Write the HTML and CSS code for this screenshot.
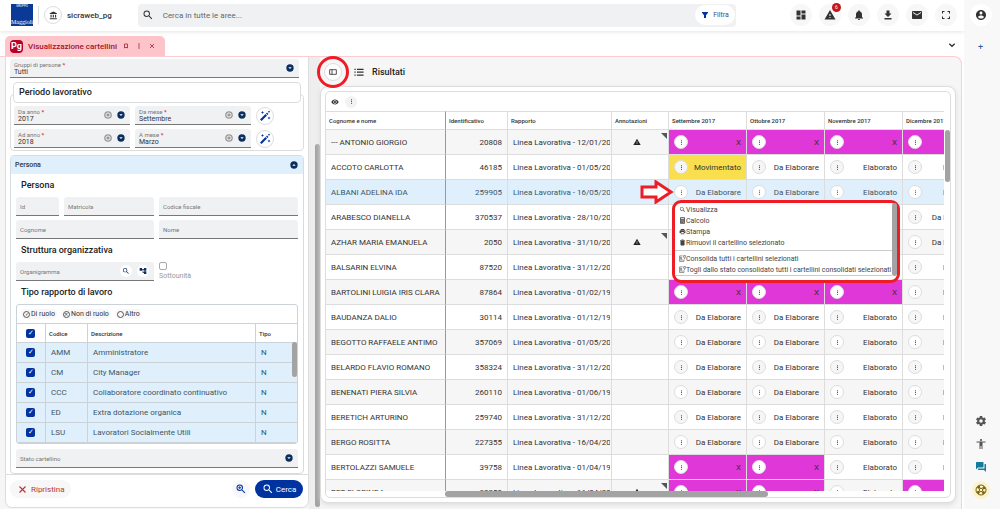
FILE: index.html
```html
<!DOCTYPE html>
<html lang="it">
<head>
    <meta charset="UTF-8">
    <meta name="viewport" content="width=device-width, initial-scale=1.0">
    <title>Visualizzazione cartellini</title>

    <link rel="stylesheet" href="styles.css">
</head>
<body>
    <!-- icons -->
    <svg class="sprite" aria-hidden="true">
        <symbol id="search" viewBox="0 0 24 24"><path d="M15.5 14h-.79l-.28-.27A6.471 6.471 0 0 0 16 9.5 6.5 6.5 0 1 0 9.5 16c1.61 0 3.09-.59 4.23-1.57l.27.28v.79l5 4.99L20.49 19l-4.99-5zm-6 0C7.01 14 5 11.99 5 9.5S7.01 5 9.5 5 14 7.01 14 9.5 11.99 14 9.5 14z"/></symbol>
        <symbol id="zoom" viewBox="0 0 24 24"><path d="M15.5 14h-.79l-.28-.27A6.471 6.471 0 0 0 16 9.5 6.5 6.5 0 1 0 9.5 16c1.61 0 3.09-.59 4.23-1.57l.27.28v.79l5 4.99L20.49 19l-4.99-5zm-6 0C7.01 14 5 11.99 5 9.5S7.01 5 9.5 5 14 7.01 14 9.5 11.99 14 9.5 14zM8.700 6.500h1.600v2.200h2.200v1.600h-2.200v2.200H8.700v-2.200H6.500V8.700h2.200z"/></symbol>
        <symbol id="bank" viewBox="0 0 24 24"><path d="M4 10v7h3v-7H4zm6 0v7h3v-7h-3zM2 22h19v-3H2v3zm14-12v7h3v-7h-3zm-4.500-9L2 6v2h19V6l-9.500-5z"/></symbol>
        <symbol id="funnel" viewBox="0 0 24 24"><path d="M3 3h18v2l-6 8v8h-6v-8L3 5z"/></symbol>
        <symbol id="dashboard" viewBox="0 0 24 24"><path d="M3 13h8V3H3v10zm0 8h8v-6H3v6zm10 0h8V11h-8v10zm0-18v6h8V3h-8z"/></symbol>
        <symbol id="warning" viewBox="0 0 24 24"><path d="M1 21h22L12 2 1 21zm12-3h-2v-2h2v2zm0-4h-2v-4h2v4z"/></symbol>
        <symbol id="bell" viewBox="0 0 24 24"><path d="M12 22c1.100 0 2-.9 2-2h-4c0 1.100.89 2 2 2zm6-6v-5c0-3.070-1.640-5.640-4.500-6.320V4c0-.83-.67-1.500-1.500-1.500s-1.500.67-1.500 1.500v.68C7.630 5.360 6 7.920 6 11v5l-2 2v1h16v-1l-2-2z"/></symbol>
        <symbol id="download" viewBox="0 0 24 24"><path d="M19 9h-4V3H9v6H5l7 7 7-7zM5 18v3h14v-3H5z"/></symbol>
        <symbol id="mail" viewBox="0 0 24 24"><path d="M20 4H4c-1.100 0-2 .9-2 2v12c0 1.100.9 2 2 2h16c1.100 0 2-.9 2-2V6c0-1.100-.9-2-2-2zm0 4l-8 5-8-5V6l8 5 8-5v2z"/></symbol>
        <symbol id="fullscreen" viewBox="0 0 24 24"><path d="M6 15H4v5h5v-2H6v-3zM4 9h2V6h3V4H4v5zm14 9h-3v2h5v-5h-2v3zM15 4v2h3v3h2V4h-5z"/></symbol>
        <symbol id="account" viewBox="0 0 24 24"><path d="M12 2C6.480 2 2 6.480 2 12s4.480 10 10 10 10-4.480 10-10S17.520 2 12 2zm0 3c1.660 0 3 1.340 3 3s-1.340 3-3 3-3-1.340-3-3 1.340-3 3-3zm0 14.200c-2.500 0-4.710-1.280-6-3.220.03-1.990 4-3.080 6-3.080 1.990 0 5.970 1.090 6 3.080-1.290 1.940-3.500 3.220-6 3.220z"/></symbol>
        <symbol id="bookmark" viewBox="0 0 24 24"><path d="M6 4h12v16l-6-3-6 3z" fill="none" stroke="currentColor" stroke-width="3"/></symbol>
        <symbol id="more" viewBox="0 0 24 24"><circle cx="12" cy="4" r="2.600"/><circle cx="12" cy="12" r="2.600"/><circle cx="12" cy="20" r="2.600"/></symbol>
        <symbol id="close" viewBox="0 0 24 24"><path d="M4 4l16 16M20 4L4 20" fill="none" stroke="currentColor" stroke-width="3"/></symbol>
        <symbol id="chevron" viewBox="0 0 24 24"><path d="M4 8l8 8 8-8" fill="none" stroke="currentColor" stroke-width="4"/></symbol>
        <symbol id="drop" viewBox="0 0 24 24"><circle cx="12" cy="12" r="11"/><path d="M7 10h10l-5 5z" fill="#fff"/></symbol>
        <symbol id="rise" viewBox="0 0 24 24"><circle cx="12" cy="12" r="11"/><path d="M7 14h10l-5-5z" fill="#fff"/></symbol>
        <symbol id="clear" viewBox="0 0 24 24"><circle cx="12" cy="12" r="9.500" fill="none" stroke="currentColor" stroke-width="4"/><path d="M8 8l8 8M16 8l-8 8" fill="none" stroke="currentColor" stroke-width="4"/></symbol>
        <symbol id="wand" viewBox="0 0 24 24"><path d="M2 19L13 8l3 3L5 22zM14 7l2-2 3 3-2 2zM7 2l1 2 2 1-2 1-1 2-1-2-2-1 2-1zM20 1l.8 1.700L22.500 3.500l-1.700.8L20 6l-.8-1.700-1.700-.8 1.700-.8zM20 13l1 2 2 1-2 1-1 2-1-2-2-1 2-1z"/></symbol>
        <symbol id="tree" viewBox="0 0 24 24"><path d="M22 11V3h-7v3H9V3H2v8h7V8h2v10h4v3h7v-8h-7v3h-2V8h2v3z"/></symbol>
        <symbol id="panel" viewBox="0 0 24 24"><path d="M2 5h20v14H2zM9 5v14" fill="none" stroke="currentColor" stroke-width="2.500"/></symbol>
        <symbol id="list" viewBox="0 0 24 24"><path d="M1 4h3v3H1zM1 11h3v3H1zM1 18h3v3H1zM7 4h16v3H7zM7 11h16v3H7zM7 18h16v3H7z"/></symbol>
        <symbol id="eye" viewBox="0 0 24 24"><path d="M12 4.500C7 4.500 2.730 7.610 1 12c1.730 4.390 6 7.500 11 7.500s9.270-3.110 11-7.500c-1.730-4.390-6-7.500-11-7.500zM12 17c-2.760 0-5-2.240-5-5s2.240-5 5-5 5 2.240 5 5-2.240 5-5 5zm0-8c-1.660 0-3 1.340-3 3s1.340 3 3 3 3-1.340 3-3-1.340-3-3-3z"/></symbol>
        <symbol id="calc" viewBox="0 0 24 24"><path d="M4 1h16v22H4z"/><path d="M7 4h10v4H7zM7 11h2v2H7zM11 11h2v2h-2zM15 11h2v2h-2zM7 15h2v2H7zM11 15h2v2h-2zM15 15h2v5h-2zM7 19h6v1H7z" fill="#fff"/></symbol>
        <symbol id="print" viewBox="0 0 24 24"><path d="M19 8H5c-1.660 0-3 1.340-3 3v6h4v4h12v-4h4v-6c0-1.660-1.340-3-3-3zm-3 11H8v-5h8v5zm3-7c-.55 0-1-.45-1-1s.45-1 1-1 1 .45 1 1-.45 1-1 1zm-1-9H6v4h12V3z"/></symbol>
        <symbol id="trash" viewBox="0 0 24 24"><path d="M5 20c0 1.100.9 2 2 2h10c1.100 0 2-.9 2-2V7H5v13zM20 3h-4l-1-1H9L8 3H4v3h16V3z"/></symbol>
        <symbol id="badge" viewBox="0 0 24 24"><path d="M12 3H2v19h15v-7M5 17h8M7 8a2 2 0 1 0 .1 0M4 14q3-4 6 0M16 2h6v5l-3 4-3-4zM19 11v3" fill="none" stroke="currentColor" stroke-width="2"/></symbol>
        <symbol id="gear" viewBox="0 0 24 24"><path d="M19.430 12.980c.04-.32.07-.64.07-.98s-.03-.66-.07-.98l2.110-1.650c.19-.15.24-.42.12-.64l-2-3.460c-.12-.22-.39-.3-.61-.22l-2.490 1c-.52-.4-1.080-.73-1.690-.98l-.38-2.650C14.460 2.180 14.250 2 14 2h-4c-.25 0-.46.18-.49.42l-.38 2.650c-.61.25-1.170.59-1.690.98l-2.490-1c-.23-.09-.49 0-.61.22l-2 3.460c-.13.22-.07.49.12.64l2.110 1.650c-.04.32-.07.65-.07.98s.03.66.07.98l-2.110 1.650c-.19.15-.24.42-.12.64l2 3.460c.12.22.39.3.61.22l2.490-1c.52.4 1.080.73 1.690.98l.38 2.650c.03.24.24.42.49.42h4c.25 0 .46-.18.49-.42l.38-2.650c.61-.25 1.170-.59 1.690-.98l2.490 1c.23.09.49 0 .61-.22l2-3.460c.12-.22.07-.49-.12-.64l-2.110-1.650zM12 15.500a3.500 3.500 0 1 1 0-7 3.500 3.500 0 0 1 0 7z"/></symbol>
        <symbol id="person" viewBox="0 0 24 24"><path d="M12 2c1.100 0 2 .9 2 2s-.9 2-2 2-2-.9-2-2 .9-2 2-2zm9 7h-6v13h-2v-6h-2v6H9V9H3V7h18v2z"/></symbol>
        <symbol id="forum" viewBox="0 0 24 24"><path d="M21 6h-2v9H6v2c0 .55.45 1 1 1h11l4 4V7c0-.55-.45-1-1-1zm-4 6V3c0-.55-.45-1-1-1H3c-.55 0-1 .45-1 1v14l4-4h10c.55 0 1-.45 1-1z"/></symbol>
        <symbol id="help" viewBox="0 0 24 24"><g fill="none" stroke="currentColor"><circle cx="12" cy="12" r="10" stroke-width="2"/><circle cx="12" cy="12" r="3.500" stroke-width="2"/><circle cx="12" cy="12" r="7" stroke-width="5" stroke-dasharray="5 6" stroke-dashoffset="-3"/></g></symbol>
    </svg>

    <div class="app">
        <header class="topbar">
            <div class="logo"><span class="logo-top">GRUPPO</span><span class="logo-name">Maggioli</span></div>
            <div class="company">
                <button type="button" class="round" aria-label="Ente"><svg><use href="#bank"/></svg></button>
                <b>sicraweb_pg</b>
            </div>
            <div class="search">
                <svg><use href="#search"/></svg>
                <input type="search" placeholder="Cerca in tutte le aree..." aria-label="Cerca in tutte le aree">
                <button type="button" class="filter"><svg><use href="#funnel"/></svg>Filtra</button>
            </div>
            <nav class="actions">
                <button type="button" aria-label="Dashboard"><svg><use href="#dashboard"/></svg></button>
                <button type="button" aria-label="Avvisi"><svg><use href="#warning"/></svg><span class="count">6</span></button>
                <button type="button" aria-label="Notifiche"><svg><use href="#bell"/></svg></button>
                <button type="button" aria-label="Download"><svg><use href="#download"/></svg></button>
                <button type="button" aria-label="Messaggi"><svg><use href="#mail"/></svg></button>
                <button type="button" aria-label="Schermo intero"><svg><use href="#fullscreen"/></svg></button>
            </nav>
        </header>

        <div class="tabs">
            <div class="tab">
                <span class="pg">Pg</span>
                <b>Visualizzazione cartellini</b>
                <button type="button" aria-label="Segnalibro"><svg><use href="#bookmark"/></svg></button>
                <button type="button" aria-label="Altro"><svg><use href="#more"/></svg></button>
                <button type="button" aria-label="Chiudi"><svg><use href="#close"/></svg></button>
            </div>
            <button type="button" class="tabs-more" aria-label="Schede"><svg><use href="#chevron"/></svg></button>
        </div>

        <main class="workspace">
            <!-- search form -->
            <form class="filters">
                <div class="filters-body">
                    <div class="field">
                        <div class="field-text">
                            <label for="gruppi">Gruppi di persone <i>*</i></label>
                            <select id="gruppi"><option>Tutti</option></select>
                        </div>
                        <svg class="drop"><use href="#drop"/></svg>
                    </div>

                    <section class="period">
                        <h2 class="period-title">Periodo lavorativo</h2>
                        <div class="row">
                            <div class="field">
                                <div class="field-text">
                                    <label for="daAnno">Da anno <i>*</i></label>
                                    <select id="daAnno"><option>2017</option></select>
                                </div>
                                <svg class="clear"><use href="#clear"/></svg>
                                <svg class="drop"><use href="#drop"/></svg>
                            </div>
                            <div class="field">
                                <div class="field-text">
                                    <label for="daMese">Da mese <i>*</i></label>
                                    <select id="daMese"><option>Settembre</option></select>
                                </div>
                                <svg class="clear"><use href="#clear"/></svg>
                                <svg class="drop"><use href="#drop"/></svg>
                            </div>
                            <button type="button" class="round wand" aria-label="Imposta inizio"><svg><use href="#wand"/></svg></button>
                        </div>
                        <div class="row">
                            <div class="field">
                                <div class="field-text">
                                    <label for="adAnno">Ad anno <i>*</i></label>
                                    <select id="adAnno"><option>2018</option></select>
                                </div>
                                <svg class="clear"><use href="#clear"/></svg>
                                <svg class="drop"><use href="#drop"/></svg>
                            </div>
                            <div class="field">
                                <div class="field-text">
                                    <label for="aMese">A mese <i>*</i></label>
                                    <select id="aMese"><option>Marzo</option></select>
                                </div>
                                <svg class="clear"><use href="#clear"/></svg>
                                <svg class="drop"><use href="#drop"/></svg>
                            </div>
                            <button type="button" class="round wand" aria-label="Imposta fine"><svg><use href="#wand"/></svg></button>
                        </div>
                    </section>

                    <section class="person">
                        <div class="person-head"><b>Persona</b><svg class="drop"><use href="#rise"/></svg></div>
                        <div class="person-body">
                            <h2>Persona</h2>
                            <div class="grid">
                                <div class="field empty"><label for="id">Id</label><input id="id" type="text"></div>
                                <div class="field empty"><label for="matricola">Matricola</label><input id="matricola" type="text"></div>
                                <div class="field empty"><label for="cf">Codice fiscale</label><input id="cf" type="text"></div>
                                <div class="field empty wide"><label for="cognome">Cognome</label><input id="cognome" type="text"></div>
                                <div class="field empty"><label for="nome">Nome</label><input id="nome" type="text"></div>
                            </div>
                            <h2>Struttura organizzativa</h2>
                            <div class="grid">
                                <div class="field empty wide">
                                    <label for="org">Organigramma</label><input id="org" type="text">
                                    <button type="button" class="mini" aria-label="Cerca organigramma"><svg><use href="#search"/></svg></button>
                                    <button type="button" class="mini" aria-label="Albero"><svg><use href="#tree"/></svg></button>
                                </div>
                                <div class="sub"><input type="checkbox" id="sub"><label for="sub">Sottounità</label></div>
                            </div>
                            <h2>Tipo rapporto di lavoro</h2>
                            <div class="types">
                                <div class="types-bar">
                                    <label><input type="checkbox" class="yes" checked>Di ruolo</label>
                                    <label><input type="checkbox" class="no" checked>Non di ruolo</label>
                                    <label><input type="checkbox">Altro</label>
                                </div>
                                <table>
                                    <colgroup><col class="c-check"><col class="c-code"><col><col class="c-type"></colgroup>
                                    <thead>
                                        <tr><th><input type="checkbox" aria-label="Tutti" checked></th><th>Codice</th><th>Descrizione</th><th>Tipo</th></tr>
                                    </thead>
                                    <tbody class="typeList"></tbody>
                                </table>
                                <span class="bar types-scroll"></span>
                            </div>
                            <div class="field empty">
                                <label for="stato">Stato cartellino</label>
                                <select id="stato"><option></option></select>
                                <svg class="drop"><use href="#drop"/></svg>
                            </div>
                        </div>
                    </section>
                </div>
                <div class="filters-foot">
                    <button type="reset" class="reset"><svg><use href="#close"/></svg>Ripristina</button>
                    <button type="button" class="advanced" aria-label="Ricerca avanzata"><svg><use href="#zoom"/></svg></button>
                    <button type="button" class="submit"><svg><use href="#search"/></svg>Cerca</button>
                </div>
            </form>

            <div class="gutter"><span class="bar"></span></div>

            <!-- results -->
            <section class="results">
                <div class="results-head">
                    <button type="button" class="round toggle" aria-label="Mostra filtri"><svg><use href="#panel"/></svg></button>
                    <svg class="list"><use href="#list"/></svg>
                    <h2>Risultati</h2>
                </div>
                <div class="card">
                    <div class="sheet">
                        <div class="sheet-bar">
                            <button type="button" aria-label="Colonne"><svg><use href="#eye"/></svg></button>
                            <button type="button" class="dots" aria-label="Altro"><svg><use href="#more"/></svg></button>
                        </div>
                        <div class="sheet-scroll">
                            <table>
                                <colgroup>
                                    <col class="w-name"><col class="w-ident"><col class="w-rapp"><col class="w-note">
                                    <col class="w-month"><col class="w-month"><col class="w-month"><col class="w-last">
                                </colgroup>
                                <thead>
                                    <tr>
                                        <th>Cognome e nome</th><th>Identificativo</th><th>Rapporto</th><th>Annotazioni</th>
                                        <th>Settembre 2017</th><th>Ottobre 2017</th><th>Novembre 2017</th><th>Dicembre 2017</th>
                                    </tr>
                                </thead>
                                <tbody class="personList"></tbody>
                            </table>
                        </div>
                        <span class="bar sheet-v"></span>
                        <span class="bar sheet-h"></span>
                    </div>
                </div>
            </section>
        </main>
    </div>

    <aside class="rail">
        <button type="button" class="me" aria-label="Profilo"><svg><use href="#account"/></svg></button>
        <button type="button" class="plus" aria-label="Aggiungi">+</button>
        <div class="rail-foot">
            <button type="button" aria-label="Impostazioni"><svg><use href="#gear"/></svg></button>
            <button type="button" aria-label="Accessibilità"><svg><use href="#person"/></svg></button>
            <button type="button" class="chat" aria-label="Chat"><svg><use href="#forum"/></svg></button>
            <button type="button" class="help" aria-label="Aiuto"><svg><use href="#help"/></svg></button>
        </div>
    </aside>

    <!-- context menu of the selected month -->
    <template id="menu">
        <svg class="arrow" viewBox="0 0 34 24"><path d="M2 7h14V2l15 10-15 10v-5H2z"/></svg>
        <div class="menu">
            <div class="menu-list">
                <button type="button"><svg><use href="#search"/></svg>Visualizza</button>
                <button type="button"><svg><use href="#calc"/></svg>Calcolo</button>
                <button type="button"><svg><use href="#print"/></svg>Stampa</button>
                <button type="button"><svg><use href="#trash"/></svg>Rimuovi il cartellino selezionato</button>
                <hr>
                <button type="button"><svg><use href="#badge"/></svg>Consolida tutti i cartellini selezionati</button>
                <button type="button"><svg><use href="#badge"/></svg>Togli dallo stato consolidato tutti i cartellini consolidati selezionati</button>
            </div>
            <span class="bar"></span>
        </div>
    </template>

    <script src="script.js"></script>
</body>
</html>
```
FILE: styles.css
```css
* {
    box-sizing: border-box;
}

body {
    margin: 0;
    height: 100vh;
    display: flex;
    overflow: hidden;
    background-color: #fff;
    color: #333;
    font-family: Roboto, "Liberation Sans", sans-serif;
    font-size: 8px;
}

button, input, select {
    font: inherit;
    color: inherit;
    border: 0;
    padding: 0;
    margin: 0;
    background: none;
}

button {
    display: flex;
    align-items: center;
    justify-content: center;
}

select {
    appearance: none;
}

b, h2 {
    font-weight: 500;
}

svg {
    width: 12px;
    height: 12px;
    flex: none;
    fill: currentColor;
}

.sprite {
    position: absolute;
    width: 0;
    height: 0;
}

.bar {
    display: block;
    background-color: #a3a3a3;
    border-radius: 3px;
}

.app {
    flex: 1;
    min-width: 0;
    display: flex;
    flex-direction: column;
}

.round {
    width: 18px;
    height: 18px;
    flex: none;
    border: 1px solid #ddd;
    border-radius: 50%;
    background-color: #fff;
}

/* top bar */
.topbar {
    flex: 0 0 31px;
    display: flex;
    align-items: center;
    padding: 0 7px 1px 11px;
    box-shadow: 0 1px 4px #e4e4e4;
}

.logo {
    width: 22px;
    height: 22px;
    display: flex;
    flex-direction: column;
    align-items: center;
    justify-content: space-between;
    background-color: #0a3a96;
    color: #fff;
    overflow: hidden;
}

.logo-top {
    font-size: 3px;
    line-height: 5px;
}

.logo-name {
    font-family: "Liberation Serif", serif;
    font-size: 6px;
    line-height: 7px;
}

.company {
    display: flex;
    align-items: center;
    gap: 5px;
    margin-left: 5px;
    padding-left: 5px;
    border-left: 1px solid #ddd;
}

.company svg {
    width: 9px;
    height: 9px;
}

.search {
    flex: 1;
    height: 23px;
    display: flex;
    align-items: center;
    gap: 9px;
    margin: 0 54px 0 26px;
    padding: 0 1px 0 4px;
    border-radius: 4px;
    background-color: #f0f1f2;
}

.search input {
    flex: 1;
    min-width: 0;
    outline: 0;
    appearance: none;
}

.search input::placeholder {
    color: #666;
    opacity: 1;
}

.filter {
    width: 40px;
    height: 20px;
    gap: 4px;
    border-radius: 10px;
    background-color: #fff;
    color: #41507a;
    font-size: 7px;
}

.filter svg {
    width: 8px;
    height: 8px;
    color: #0033a0;
}

.actions {
    display: flex;
    gap: 7px;
}

.actions button {
    position: relative;
    width: 22px;
    height: 22px;
    border-radius: 50%;
    background-color: #f7f7f7;
}

.count {
    position: absolute;
    top: -1px;
    right: 0;
    width: 9px;
    height: 9px;
    border-radius: 50%;
    background-color: #c4161c;
    color: #fff;
    font-size: 5px;
    line-height: 9px;
}

/* tabs */
.tabs {
    flex: 0 0 25px;
    display: flex;
    align-items: flex-end;
    justify-content: space-between;
    padding: 0 8px 0 5px;
}

.tab {
    height: 20px;
    display: flex;
    align-items: center;
    gap: 5px;
    padding: 0 9px 0 5px;
    border-radius: 5px 5px 0 0;
    background-color: #fdc5c9;
    color: #a3102c;
}

.tab button {
    width: 8px;
}

.tab svg {
    width: 6px;
    height: 6px;
}

.pg {
    width: 13px;
    height: 13px;
    border-radius: 4px;
    background-color: #b8002b;
    color: #fff;
    font-size: 9px;
    font-weight: 700;
    line-height: 13px;
    text-align: center;
}

.tabs-more {
    height: 22px;
}

.tabs-more svg {
    width: 8px;
    height: 8px;
}

/* workspace */
.workspace {
    flex: 1;
    min-height: 0;
    display: flex;
    margin-right: 2px;
    padding-left: 5px;
    border-top: 1px solid #fccdd0;
    border-right: 1px solid #fccdd0;
    border-top-right-radius: 8px;
    background-color: #f6f6f6;
}

.filters {
    flex: 0 0 304px;
    display: flex;
    flex-direction: column;
    margin-bottom: 1px;
    border: 1px solid #ddd;
    border-top: 0;
    border-radius: 0 0 7px 7px;
    background-color: #fff;
    overflow: hidden;
}

.filters-body {
    flex: 1;
    min-height: 0;
    padding: 2px 4px 0;
    overflow: hidden;
}

.filters-body > .field {
    margin-right: 5px;
}

.field {
    flex: 1;
    min-width: 0;
    height: 19px;
    display: flex;
    align-items: center;
    gap: 5px;
    padding: 0 5px 0 4px;
    border-bottom: 1px solid #777;
    border-radius: 3px 3px 0 0;
    background-color: #f0f1f2;
}

.field-text {
    flex: 1;
    min-width: 0;
}

.field label {
    display: block;
    color: #777;
    font-size: 6px;
    line-height: 7px;
    white-space: nowrap;
}

.field i {
    color: #d22;
    font-style: normal;
    font-weight: 700;
}

.field select, .field input {
    display: block;
    width: 100%;
    height: 8px;
    font-size: 7px;
    line-height: 8px;
}

.field.empty input, .field.empty select {
    flex: 1;
    width: auto;
    min-width: 0;
}

.drop {
    width: 8px;
    height: 8px;
    color: #0b2e5e;
}

.clear {
    width: 8px;
    height: 8px;
    color: #999;
}

.row {
    display: flex;
    align-items: center;
    gap: 5px;
}

.row + .row {
    margin-top: 4px;
}

.period {
    margin-top: 16px;
    padding: 0 29px 2px 3px;
    border: 1px solid #ddd;
    border-radius: 4px;
}

.period-title {
    position: relative;
    height: 21px;
    margin: -13px -27px 3px -1px;
    padding-left: 5px;
    border: 1px solid #ddd;
    border-radius: 4px;
    background-color: #fff;
    color: #222;
    font-size: 9px;
    line-height: 19px;
}

.wand {
    color: #0033a0;
}

.person {
    margin-top: 4px;
    border: 1px solid #d5dde2;
    border-radius: 4px;
    overflow: hidden;
}

.person-head {
    height: 18px;
    display: flex;
    align-items: center;
    justify-content: space-between;
    padding: 0 5px 0 4px;
    background-color: #dfeffc;
    font-size: 7px;
}

.person-body {
    padding: 0 5px 5px;
}

.person-body h2 {
    margin: 0 0 0 5px;
    color: #222;
    font-size: 9px;
    line-height: 23px;
}

.grid {
    display: grid;
    grid-template-columns: 43px 90px 1fr;
    gap: 4px 5px;
}

.wide {
    grid-column: span 2;
}

.mini {
    width: 12px;
    height: 12px;
    border-radius: 50%;
    background-color: #fff;
    color: #0b2e5e;
}

.mini svg {
    width: 8px;
    height: 8px;
}

.sub {
    color: #999;
    font-size: 7px;
    line-height: 9px;
}

.sub label {
    display: block;
}

.sub input {
    display: block;
    width: 8px;
    height: 8px;
    margin-bottom: 2px;
    appearance: none;
    border: 1px solid #aaa;
    border-radius: 2px;
}

/* employment types */
.types {
    position: relative;
    height: 140px;
    margin-bottom: 5px;
    border: 1px solid #ccd3d8;
    border-radius: 3px;
    overflow: hidden;
}

.types-bar {
    height: 18px;
    display: flex;
    align-items: center;
    gap: 4px;
    padding-left: 4px;
}

.types-bar label {
    display: flex;
    align-items: center;
    gap: 1px;
    padding: 1px 2px;
    border-radius: 6px;
    background-color: #f7f7f7;
    font-size: 7px;
}

.types-bar input {
    width: 7px;
    height: 7px;
    appearance: none;
    border: 1px solid #555;
    border-radius: 50%;
    font-size: 5px;
    line-height: 5px;
    text-align: center;
}

.types-bar .yes::after {
    content: "✓";
}

.types-bar .no::after {
    content: "✕";
}

.types table, .sheet table {
    width: 100%;
    border-collapse: separate;
    border-spacing: 0;
    table-layout: fixed;
}

.c-check {
    width: 28px;
}

.c-code {
    width: 42px;
}

.c-type {
    width: 42px;
}

.types th, .types td {
    height: 20px;
    padding: 0 0 0 5px;
    border-top: 1px solid #ccd3d8;
    border-left: 1px solid #ccd3d8;
    text-align: left;
    white-space: nowrap;
}

.types th {
    height: 19px;
    padding-left: 3px;
    font-size: 6px;
    font-weight: 500;
}

.types td {
    background-color: #dfeffc;
    color: #3d5666;
}

.types th:first-child, .types td:first-child {
    padding-left: 9px;
    border-left: 0;
}

.types table input {
    display: block;
    width: 9px;
    height: 9px;
    appearance: none;
    border-radius: 2px;
    background-color: #0033a0;
    color: #fff;
    font-size: 7px;
    line-height: 9px;
    text-align: center;
}

.types table input::after {
    content: "✓";
}

.types-scroll {
    position: absolute;
    top: 37px;
    right: 0;
    width: 5px;
    height: 35px;
}

.filters-foot {
    flex: 0 0 33px;
    display: flex;
    align-items: center;
    padding: 0 5px 4px 4px;
    border-top: 1px solid #ddd;
}

.filters-foot button {
    height: 18px;
    border-radius: 9px;
}

.reset {
    gap: 4px;
    padding: 0 7px 0 8px;
    background-color: #f7f7f7;
    color: #b8343c;
}

.reset svg {
    width: 9px;
    height: 9px;
}

.advanced {
    width: 18px;
    margin: 0 5px 0 auto;
    background-color: #f7f7f7;
    color: #0033a0;
}

.submit {
    width: 48px;
    gap: 2px;
    background-color: #0033a0;
    color: #fff;
}

.gutter {
    flex: 0 0 11px;
    display: flex;
    flex-direction: column;
    align-items: flex-end;
    background-color: #eee;
}

.gutter .bar {
    flex: 1;
    width: 5px;
    margin: 87px 0 2px;
}

/* results */
.results {
    flex: 1;
    min-width: 0;
    display: flex;
    flex-direction: column;
    padding: 0 5px 6px 0;
}

.results-head {
    flex: 0 0 29px;
    display: flex;
    align-items: center;
    padding-left: 4px;
}

.results-head h2 {
    margin: 0 0 0 8px;
    color: #222;
    font-size: 9px;
}

.toggle {
    position: relative;
}

.toggle::after {
    content: "";
    position: absolute;
    inset: -8px;
    z-index: 2;
    border: 3px solid #ee1c24;
    border-radius: 50%;
}

.toggle svg {
    width: 8px;
    height: 8px;
}

.list {
    width: 10px;
    height: 10px;
    margin-left: 12px;
}

.card {
    flex: 1;
    min-height: 0;
    display: flex;
    padding: 4px;
    border: 1px solid #ddd;
    border-radius: 8px;
    background-color: #fff;
    box-shadow: 0 2px 5px #ddd;
}

.sheet {
    position: relative;
    flex: 1;
    min-width: 0;
    display: flex;
    flex-direction: column;
    border: 1px solid #ddd;
    border-radius: 5px;
}

.sheet-bar {
    flex: 0 0 19px;
    display: flex;
    align-items: center;
    gap: 4px;
    padding-left: 3px;
}

.sheet-bar button {
    width: 12px;
    height: 12px;
    border-radius: 50%;
}

.sheet-bar svg {
    width: 8px;
    height: 8px;
}

.sheet-bar .dots {
    background-color: #f2f2f2;
}

.sheet-bar .dots svg, .dot svg {
    width: 5px;
    height: 5px;
}

.sheet-scroll {
    flex: 1;
    min-height: 0;
    margin: 0 6px 6px 0;
    overflow: hidden;
}

.sheet .sheet-scroll table {
    width: 657px;
}

.w-name {
    width: 120px;
}

.w-ident {
    width: 62px;
}

.w-rapp {
    width: 104px;
}

.w-note {
    width: 57px;
}

.w-month {
    width: 78px;
}

.w-last {
    width: 80px;
}

.sheet th {
    height: 19px;
    padding: 0 3px;
    border: 0 solid #ddd;
    border-width: 1px 1px 1px 0;
    font-size: 6px;
    font-weight: 500;
    text-align: left;
    white-space: nowrap;
}

.sheet td {
    height: 25px;
    padding: 0 5px;
    border: 0 solid #ddd;
    border-width: 0 1px 1px 0;
    white-space: nowrap;
}

.sheet th:first-child, .sheet td:first-child {
    border-right-color: #999;
}

.sheet tr:nth-child(odd) td {
    background-color: #f6f6f6;
}

.sheet tr.selected td {
    background-color: #dfeffc;
    color: #3d5666;
}

.sheet .ident {
    text-align: right;
}

.sheet .rapp {
    padding-right: 1px;
}

.clip {
    overflow: hidden;
}

.sheet .note {
    position: relative;
    padding: 0 0 0 21px;
}

.note svg {
    display: block;
    width: 8px;
    height: 8px;
    color: #222;
}

.note::after {
    content: "";
    position: absolute;
    top: 3px;
    right: 1px;
    border: 3px solid #555;
    border-bottom-color: transparent;
    border-left-color: transparent;
}

.state {
    display: flex;
    align-items: center;
    justify-content: space-between;
}

.dot {
    width: 14px;
    height: 14px;
    border: 1px solid #ddd;
    border-radius: 50%;
    background-color: #f6f6f6;
}

tr:nth-child(odd) .dot, .closed .dot {
    background-color: #fff;
}

.sheet tr td.closed {
    background-color: #e037d8;
}

.sheet tr td.moved {
    background-color: #f9df4d;
}

.open {
    position: relative;
}

.sheet-v {
    position: absolute;
    top: 38px;
    right: 0;
    width: 5px;
    height: 52px;
}

.sheet-h {
    position: absolute;
    bottom: 0;
    left: 119px;
    width: 323px;
    height: 6px;
}

/* context menu */
.arrow {
    position: absolute;
    top: 0;
    left: -29px;
    width: 34px;
    height: 24px;
    fill: #fff;
    stroke: #ee1c24;
    stroke-width: 3;
}

.menu {
    position: absolute;
    top: 20px;
    left: 3px;
    z-index: 3;
    display: flex;
    padding: 0 0 4px;
    border: 3px solid #ee1c24;
    border-radius: 9px;
    background-color: #fff;
    color: #444;
}

.menu-list {
    padding: 1px 1px 0 4px;
    border-bottom: 1px solid #ccc;
}

.menu button {
    height: 11px;
    font-size: 7px;
}

.menu svg {
    width: 7px;
    height: 7px;
}

.menu hr {
    margin: 2px -1px 2px -4px;
    border: 0;
    border-top: 1px solid #ccc;
}

.menu .bar {
    width: 5px;
}

/* right rail */
.rail {
    flex: 0 0 36px;
    display: flex;
    flex-direction: column;
    align-items: center;
    padding: 4px 3px 10px 0;
    background-color: #f8f8f8;
}

.rail .me {
    width: 22px;
    height: 22px;
    border-radius: 50%;
    background-color: #fff;
}

.rail .plus {
    margin-top: 16px;
    color: #2b5aa0;
    font-size: 9px;
}

.rail-foot {
    display: flex;
    flex-direction: column;
    gap: 5px;
    margin-top: auto;
}

.rail-foot button {
    width: 18px;
    height: 18px;
    border-radius: 50%;
    color: #555;
}

.rail-foot .chat {
    color: #157a9c;
}

.rail-foot .help {
    background-color: #fbf3cc;
    color: #7a6210;
}
```
FILE: script.js
```
var types = [
    ["AMM", "Amministratore"],
    ["CM", "City Manager"],
    ["CCC", "Collaboratore coordinato continuativo"],
    ["ED", "Extra dotazione organica"],
    ["LSU", "Lavoratori Socialmente Utili"]
];

// D = Da Elaborare, E = Elaborato, M = Movimentato, X = chiuso
var people = [
    ["--- ANTONIO GIORGIO", "20808", "12/01/20", "XXXX", true],
    ["ACCOTO CARLOTTA", "46185", "01/05/20", "MDEE", false],
    ["ALBANI ADELINA IDA", "259905", "16/05/20", "DDEE", false],
    ["ARABESCO DIANELLA", "370537", "28/10/20", "DDED", false],
    ["AZHAR MARIA EMANUELA", "2050", "31/10/20", "DDED", true],
    ["BALSARIN ELVINA", "87520", "31/12/20", "DDEE", false],
    ["BARTOLINI LUIGIA IRIS CLARA", "87864", "01/02/19", "XXXE", false],
    ["BAUDANZA DALIO", "30114", "01/12/19", "DDEE", false],
    ["BEGOTTO RAFFAELE ANTIMO", "357069", "01/05/20", "DDEE", false],
    ["BELARDO FLAVIO ROMANO", "358324", "31/12/20", "DDEE", false],
    ["BENENATI PIERA SILVIA", "260110", "01/06/19", "DDEE", false],
    ["BERETICH ARTURINO", "259740", "31/12/20", "DDEE", false],
    ["BERGO ROSITTA", "227355", "16/04/20", "DDEE", false],
    ["BERTOLAZZI SAMUELE", "39758", "01/04/19", "XXEE", false],
    ["BET FLORINDA", "82250", "16/04/20", "XXEX", true]
];

var names = { D: "Da Elaborare", E: "Elaborato", M: "Movimentato", X: "X" };
var css = { D: "", E: "", M: "moved", X: "closed" };

var str = "";
for (var i = 0; i < types.length; i++) {
    str += '<tr>';
        str += '<td><input type="checkbox" aria-label="Seleziona ' + types[i][0] + '" checked></td>';
        str += '<td>' + types[i][0] + '</td>';
        str += '<td>' + types[i][1] + '</td>';
        str += '<td>N</td>';
    str += '</tr>';
}
// the next row starts under the edge of the list
str += '<tr><td></td><td></td><td></td><td></td></tr>';
document.querySelector(".typeList").innerHTML = str;

str = "";
for (var i = 0; i < people.length; i++) {
    var p = people[i];
    var selected = i == 2;

    str += '<tr' + (selected ? ' class="selected"' : '') + '>';
        str += '<td>' + p[0] + '</td>';
        str += '<td class="ident">' + p[1] + '</td>';
        str += '<td class="rapp"><div class="clip">Linea Lavorativa - ' + p[2] + '</div></td>';
        str += p[4] ? '<td class="note"><svg><use href="#warning"/></svg></td>' : '<td></td>';
        for (var m = 0; m < 4; m++) {
            var s = p[3][m];
            var open = selected && m == 0;
            str += '<td class="' + css[s] + (open ? ' open' : '') + '">';
                str += '<div class="state">';
                    str += '<button type="button" class="dot" aria-label="Azioni"><svg><use href="#more"/></svg></button>';
                    str += '<span>' + names[s] + '</span>';
                str += '</div>';
                if (open) str += document.querySelector("#menu").innerHTML;
            str += '</td>';
        }
    str += '</tr>';
}
document.querySelector(".personList").innerHTML = str;
```
